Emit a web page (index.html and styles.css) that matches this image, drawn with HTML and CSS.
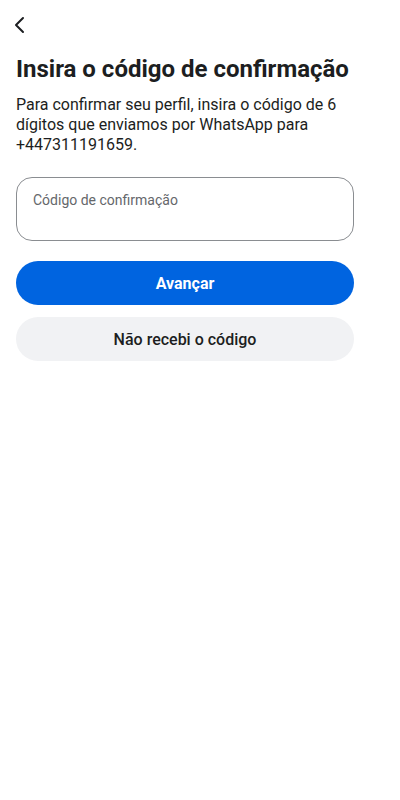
FILE: index.html
```
<!DOCTYPE html>
<html lang="pt">
<head>
<meta charset="utf-8">
<link rel="stylesheet" href="styles.css">
</head>
<body>
<div class="page">
  <div class="topbar">
    <button class="back" aria-label="Voltar">
      <svg width="24" height="24" viewBox="0 0 24 24"><polyline points="13,5 6,12 13,19" fill="none" stroke="#1c1e21" stroke-width="2" stroke-linecap="round" stroke-linejoin="round"/></svg>
    </button>
  </div>
  <div class="content">
    <h1 class="title">Insira o código de confirmação</h1>
    <p class="desc">Para confirmar seu perfil, insira o código de 6 dígitos que enviamos por WhatsApp para +447311191659.</p>
    <label class="field">
      <span class="field-label">Código de confirmação</span>
    </label>
    <div class="actions">
      <button class="btn btn-primary">Avançar</button>
      <button class="btn btn-secondary">Não recebi o código</button>
    </div>
  </div>
</div>
</body>
</html>
```
FILE: styles.css
```
html {
  overflow-y: scroll;
  background: #fff;
}
body {
  margin: 0;
  font-family: Roboto, "Noto Sans", sans-serif;
  color: #1c1e21;
}
.page {
  width: 338px;
  padding: 0 16px;
}
.topbar {
  height: 44px;
  display: flex;
  align-items: center;
}
.back {
  border: 0;
  background: none;
  padding: 0;
  margin-left: -6px;
  margin-top: 5px;
  width: 24px;
  height: 24px;
  display: flex;
}
.title {
  margin: 10px 0 0;
  font-size: 24px;
  line-height: 30px;
  font-weight: 700;
}
.desc {
  margin: 11px 0 0;
  font-size: 16px;
  line-height: 20px;
}
.field {
  display: block;
  margin-top: 22px;
  border: 1px solid #8a8d91;
  border-radius: 16px;
  padding: 12px 16px;
  box-sizing: border-box;
  height: 64px;
}
.field-label {
  font-size: 14px;
  line-height: 18px;
  color: #65676b;
}
.actions {
  margin-top: 20px;
  display: flex;
  flex-direction: column;
  gap: 12px;
}
.btn {
  height: 44px;
  border: 0;
  border-radius: 22px;
  font-family: inherit;
  font-size: 16px;
}
.btn-primary {
  background: #0064e0;
  color: #fff;
  font-weight: 700;
}
.btn-secondary {
  background: #f1f2f4;
  color: #1c1e21;
  font-weight: 500;
}
```
